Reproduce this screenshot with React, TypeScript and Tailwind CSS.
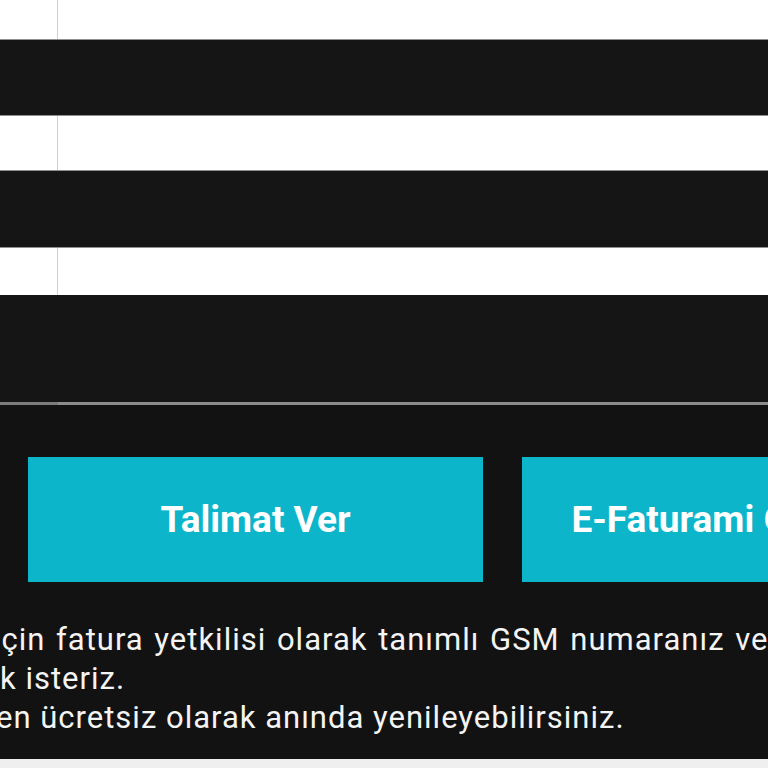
import React from 'react';

const lines = [
  { text: 'İçin fatura yetkilisi olarak tanımlı GSM numaranız ve e-posta adresiniz', indent: '-ml-[8px] [word-spacing:2px]' },
  { text: 'k isteriz.', indent: 'ml-0' },
  { text: 'en ücretsiz olarak anında yenileyebilirsiniz.', indent: '-ml-[4px]' },
];

function WhiteRow({ height }: { height: string }) {
  return (
    <div className={`flex ${height} bg-white`}>
      <div className="w-[58px] shrink-0 border-r border-[#cfcfcf]" />
      <div className="flex-1" />
    </div>
  );
}

function DarkBand({ height }: { height: string }) {
  return <div className={`${height} bg-[#151515] border-y border-[#8f8f8f]`} />;
}

export default function App() {
  return (
    <div className="w-[768px] h-[768px] overflow-hidden bg-white" style={{ fontFamily: 'Roboto, "Noto Sans", sans-serif' }}>
      {/* table rows above */}
      <WhiteRow height="h-[39px]" />
      <DarkBand height="h-[77px]" />
      <WhiteRow height="h-[54px]" />
      <DarkBand height="h-[78px]" />
      <WhiteRow height="h-[47px]" />
      <div className="h-[107px] bg-[#151515]" />
      <div className="flex h-[3px]">
        <div className="w-[58px] bg-[#7d7d7d]" />
        <div className="flex-1 bg-[#8c8c8c]" />
      </div>

      {/* action panel */}
      <div className="h-[354px] bg-[#121212] overflow-hidden">
        <div className="flex gap-[39px] pl-[28px] pt-[52px] w-[1100px]">
          <button className="w-[455px] h-[125px] shrink-0 bg-[#0db5ca] text-white text-[37px] font-bold">
            Talimat Ver
          </button>
          <button className="w-[455px] h-[125px] shrink-0 bg-[#0db5ca] text-white text-[37px] font-bold whitespace-nowrap">
            E-Faturami Görüntüle
          </button>
        </div>
        <div className="mt-[38px] text-[31px] leading-[39px] tracking-[1px] text-[#f4f4f4]">
          {lines.map((l, i) => (
            <div key={i} className={`whitespace-nowrap ${l.indent}`}>{l.text}</div>
          ))}
        </div>
      </div>
      <div className="h-[9px] bg-[#efefef]" />
    </div>
  );
}
